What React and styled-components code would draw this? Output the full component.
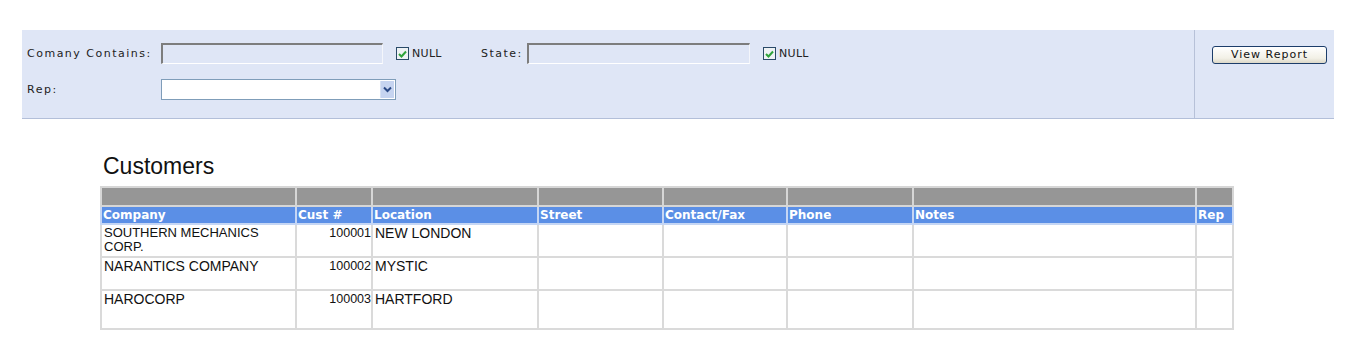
import React from "react";
import styled, { createGlobalStyle } from "styled-components";

const Global = createGlobalStyle`
  html, body { margin: 0; padding: 0; background: #ffffff; }
  body { font-family: "Liberation Sans", Arial, sans-serif; }
`;

const Page = styled.div`
  width: 1353px;
  height: 363px;
  padding: 30px 19px 0 22px;
  box-sizing: border-box;
`;

const ParamPanel = styled.div`
  display: flex;
  background: #dfe6f6;
  border-bottom: 1px solid #b3bfd9;
  height: 89px;
  box-sizing: border-box;
`;

const Fields = styled.div`
  flex: 1;
  display: flex;
  flex-direction: column;
  gap: 15px;
  padding: 13px 0 0 5px;
  border-right: 1px solid #b7c1d8;
`;

const FieldRow = styled.div`
  display: flex;
  align-items: center;
  height: 21px;
`;

const Label = styled.span`
  font-family: "DejaVu Sans", Verdana, sans-serif;
  font-size: 11px;
  letter-spacing: 1.5px;
  color: #222;
  width: ${(p) => p.$w}px;
  flex: none;
`;

const TextBox = styled.div`
  width: ${(p) => p.$w}px;
  height: 21px;
  box-sizing: border-box;
  background: #dfe6f6;
  border-top: 2px solid #7d7d7d;
  border-left: 2px solid #7d7d7d;
  border-right: 1px solid #f4f6fb;
  border-bottom: 1px solid #ffffff;
  flex: none;
`;

const NullCheck = styled.label`
  display: flex;
  align-items: center;
  gap: 3px;
  margin-left: 13px;
  width: ${(p) => p.$w}px;
  flex: none;
  font-family: "DejaVu Sans", Verdana, sans-serif;
  font-size: 11px;
  letter-spacing: 0.3px;
  color: #222;
`;

const Box = styled.span`
  width: 11px;
  height: 11px;
  border: 1px solid #2a4a68;
  background: #eef2f4;
  display: flex;
  align-items: center;
  justify-content: center;
`;

const Select = styled.div`
  width: 235px;
  height: 21px;
  box-sizing: border-box;
  background: #ffffff;
  border: 1px solid #7f9db9;
  display: flex;
  justify-content: flex-end;
  padding: 1px;
`;

const SelectArrow = styled.div`
  width: 13px;
  background: #c6d4f0;
  border-left: 1px solid #d8e2f4;
  display: flex;
  align-items: center;
  justify-content: center;
`;

const Actions = styled.div`
  width: 139px;
  padding: 14px 0 0 17px;
  box-sizing: border-box;
`;

const ViewButton = styled.button`
  width: 115px;
  height: 18px;
  padding: 0;
  box-sizing: border-box;
  border: 1px solid #1c3d6a;
  border-radius: 3px;
  background: linear-gradient(#ffffff, #f2f0e6 70%, #dcd8c8);
  font-family: "DejaVu Sans", Verdana, sans-serif;
  font-size: 11px;
  letter-spacing: 1px;
  color: #111;
`;

const Report = styled.div`
  padding: 35px 0 0 78px;
`;

const Title = styled.h1`
  margin: 0 0 8px 3px;
  font-family: "Liberation Sans", Arial, sans-serif;
  font-weight: normal;
  font-size: 23px;
  color: #111;
  line-height: 24px;
`;

const Table = styled.table`
  border-collapse: collapse;
  table-layout: fixed;
  width: 1132px;
  border: 2px solid #d6d6d6;
`;

const GrayCell = styled.td`
  background: #969696;
  height: 17px;
  padding: 0;
  border: 2px solid #d6d6d6;
`;

const HeadCell = styled.th`
  background: #5b8fe6;
  color: #fff;
  text-align: left;
  height: 16px;
  padding: 0 1px;
  border: 2px solid #c5d6f4;
  font-family: "DejaVu Sans", Verdana, sans-serif;
  font-size: 12px;
  font-weight: bold;
  white-space: nowrap;
  overflow: hidden;
`;

const Cell = styled.td`
  border: 2px solid #dadada;
  vertical-align: top;
  padding: 1px 2px 0 2px;
  height: ${(p) => p.$h}px;
  font-family: "Liberation Sans", Arial, sans-serif;
  font-size: ${(p) => (p.$small ? 13 : 14)}px;
  line-height: ${(p) => (p.$small ? 14 : 15)}px;
  text-align: ${(p) => (p.$right ? "right" : "left")};
  color: #111;
  box-sizing: border-box;
`;

const NumCell = styled(Cell)`
  font-size: 12.5px;
  line-height: 14px;
  padding-right: 0;
`;

const columns = [
  { name: "Company", w: 195 },
  { name: "Cust #", w: 76 },
  { name: "Location", w: 166 },
  { name: "Street", w: 125 },
  { name: "Contact/Fax", w: 124 },
  { name: "Phone", w: 126 },
  { name: "Notes", w: 283 },
  { name: "Rep", w: 37 },
];

const rows = [
  { company: "SOUTHERN MECHANICS CORP.", num: "100001", loc: "NEW LONDON", h: 33, small: true },
  { company: "NARANTICS COMPANY", num: "100002", loc: "MYSTIC", h: 33 },
  { company: "HAROCORP", num: "100003", loc: "HARTFORD", h: 39 },
];

const Check = () => (
  <svg width="9" height="8" viewBox="0 0 9 8">
    <path d="M1 4 L3.5 6.5 L8 1.5" stroke="#2fa33a" strokeWidth="2" fill="none" />
  </svg>
);

const Chevron = () => (
  <svg width="9" height="7" viewBox="0 0 9 7">
    <path d="M1 1.5 L4.5 5 L8 1.5" stroke="#2b4a86" strokeWidth="2" fill="none" />
  </svg>
);

export default function App() {
  return (
    <>
      <Global />
      <Page>
        <ParamPanel>
          <Fields>
            <FieldRow>
              <Label $w={134}>Comany Contains:</Label>
              <TextBox $w={222} />
              <NullCheck $w={85}>
                <Box><Check /></Box>NULL
              </NullCheck>
              <Label $w={46}>State:</Label>
              <TextBox $w={223} />
              <NullCheck $w={60}>
                <Box><Check /></Box>NULL
              </NullCheck>
            </FieldRow>
            <FieldRow>
              <Label $w={134}>Rep:</Label>
              <Select>
                <SelectArrow><Chevron /></SelectArrow>
              </Select>
            </FieldRow>
          </Fields>
          <Actions>
            <ViewButton>View Report</ViewButton>
          </Actions>
        </ParamPanel>
        <Report>
          <Title>Customers</Title>
          <Table>
            <colgroup>
              {columns.map((c) => (
                <col key={c.name} style={{ width: c.w }} />
              ))}
            </colgroup>
            <thead>
              <tr>
                {columns.map((c) => (
                  <GrayCell key={c.name} />
                ))}
              </tr>
              <tr>
                {columns.map((c) => (
                  <HeadCell key={c.name}>{c.name}</HeadCell>
                ))}
              </tr>
            </thead>
            <tbody>
              {rows.map((r) => (
                <tr key={r.num}>
                  <Cell $h={r.h} $small={r.small}>{r.company}</Cell>
                  <NumCell $h={r.h} $right>{r.num}</NumCell>
                  <Cell $h={r.h}>{r.loc}</Cell>
                  <Cell $h={r.h} />
                  <Cell $h={r.h} />
                  <Cell $h={r.h} />
                  <Cell $h={r.h} />
                  <Cell $h={r.h} />
                </tr>
              ))}
            </tbody>
          </Table>
        </Report>
      </Page>
    </>
  );
}
